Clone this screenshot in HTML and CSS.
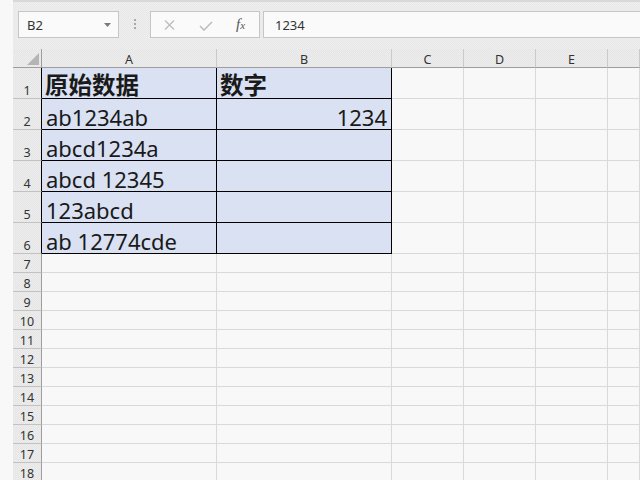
FILE: index.html
```html
<!DOCTYPE html>
<html lang="zh">
<head>
<meta charset="utf-8">
<link rel="stylesheet" href="styles.css">
</head>
<body>
<div class="app">
  <div class="strip"></div>
  <div class="main">
    <div class="toolbar">
      <div class="namebox"><span class="nb-text">B2</span>
        <svg class="arrow" width="7" height="4" viewBox="0 0 7 4"><polygon points="0,0 7,0 3.5,4" fill="#7a7a7a"/></svg>
      </div>
      <div class="dots"><span></span><span></span><span></span></div>
      <div class="fbtns">
        <svg class="ic-x" width="11" height="10" viewBox="0 0 11 10"><path d="M1 0.5 L10 9.5 M10 0.5 L1 9.5" stroke="#bdbdbd" stroke-width="1.3" fill="none"/></svg>
        <svg class="ic-ok" width="14" height="10" viewBox="0 0 14 10"><path d="M1 5 L5 9 L13 1" stroke="#bdbdbd" stroke-width="1.6" fill="none"/></svg>
        <span class="fx"><i>f</i><i class="x">x</i></span>
      </div>
      <div class="formula">1234</div>
    </div>
    <div class="sheet">
      <div class="c ch corner"><svg width="12" height="12" viewBox="0 0 12 12"><polygon points="12,0 12,12 0,12" fill="#b5b5b5"/></svg></div>
      <div class="c ch">A</div><div class="c ch">B</div><div class="c ch">C</div><div class="c ch">D</div><div class="c ch">E</div><div class="c ch"></div>

      <div class="c rh k">1</div><div class="c d t zh">原始数据</div><div class="c d t zh">数字</div><div class="c"></div><div class="c"></div><div class="c"></div><div class="c"></div>
      <div class="c rh k">2</div><div class="c d t">ab1234ab</div><div class="c d t r">1234</div><div class="c"></div><div class="c"></div><div class="c"></div><div class="c"></div>
      <div class="c rh k">3</div><div class="c d t">abcd1234a</div><div class="c d t"></div><div class="c"></div><div class="c"></div><div class="c"></div><div class="c"></div>
      <div class="c rh k">4</div><div class="c d t">abcd 12345</div><div class="c d t"></div><div class="c"></div><div class="c"></div><div class="c"></div><div class="c"></div>
      <div class="c rh k">5</div><div class="c d t">123abcd</div><div class="c d t"></div><div class="c"></div><div class="c"></div><div class="c"></div><div class="c"></div>
      <div class="c rh k">6</div><div class="c d t">ab 12774cde</div><div class="c d t"></div><div class="c"></div><div class="c"></div><div class="c"></div><div class="c"></div>

      <div class="c rh">7</div><div class="c"></div><div class="c"></div><div class="c"></div><div class="c"></div><div class="c"></div><div class="c"></div>
      <div class="c rh">8</div><div class="c"></div><div class="c"></div><div class="c"></div><div class="c"></div><div class="c"></div><div class="c"></div>
      <div class="c rh">9</div><div class="c"></div><div class="c"></div><div class="c"></div><div class="c"></div><div class="c"></div><div class="c"></div>
      <div class="c rh">10</div><div class="c"></div><div class="c"></div><div class="c"></div><div class="c"></div><div class="c"></div><div class="c"></div>
      <div class="c rh">11</div><div class="c"></div><div class="c"></div><div class="c"></div><div class="c"></div><div class="c"></div><div class="c"></div>
      <div class="c rh">12</div><div class="c"></div><div class="c"></div><div class="c"></div><div class="c"></div><div class="c"></div><div class="c"></div>
      <div class="c rh">13</div><div class="c"></div><div class="c"></div><div class="c"></div><div class="c"></div><div class="c"></div><div class="c"></div>
      <div class="c rh">14</div><div class="c"></div><div class="c"></div><div class="c"></div><div class="c"></div><div class="c"></div><div class="c"></div>
      <div class="c rh">15</div><div class="c"></div><div class="c"></div><div class="c"></div><div class="c"></div><div class="c"></div><div class="c"></div>
      <div class="c rh">16</div><div class="c"></div><div class="c"></div><div class="c"></div><div class="c"></div><div class="c"></div><div class="c"></div>
      <div class="c rh">17</div><div class="c"></div><div class="c"></div><div class="c"></div><div class="c"></div><div class="c"></div><div class="c"></div>
      <div class="c rh">18</div><div class="c"></div><div class="c"></div><div class="c"></div><div class="c"></div><div class="c"></div><div class="c"></div>
    </div>
  </div>
</div>
</body>
</html>
```
FILE: styles.css
```css
html, body {
  margin: 0;
  padding: 0;
  width: 640px;
  height: 480px;
  overflow: hidden;
  background: #f8f8f8;
  font-family: "Noto Sans", "Noto Sans CJK SC", sans-serif;
}
.app {
  display: flex;
  height: 480px;
}
.strip {
  width: 13px;
  flex: none;
  background: #f8f8f8;
}
.main {
  flex: 1;
  display: flex;
  flex-direction: column;
  min-width: 0;
  overflow: hidden;
}
.toolbar {
  flex: none;
  height: 49px;
  box-sizing: border-box;
  border-top: 2px solid #d8d8d8;
  padding: 9px 0 0 5px;
  display: flex;
  align-items: flex-start;
  background: #ebebeb;
  background-image: repeating-conic-gradient(#e7e7e7 0 25%, #efefef 0 50%);
  background-size: 2px 2px;
}
.namebox {
  width: 101px;
  height: 27px;
  box-sizing: border-box;
  border: 1px solid #c6c6c6;
  background: #fafafa;
  display: flex;
  align-items: center;
  justify-content: space-between;
  padding: 0 7px 0 7px;
  font-size: 13px;
  color: #333;
}
.nb-text { padding-left: 1px; }
.dots {
  width: 2px;
  margin: 8px 14px 0 15px;
  display: flex;
  flex-direction: column;
  gap: 2px;
}
.dots span {
  width: 2px;
  height: 2px;
  background: #a8a8a8;
}
.fbtns {
  width: 110px;
  height: 27px;
  box-sizing: border-box;
  border: 1px solid #c6c6c6;
  background: #fafafa;
  display: flex;
  align-items: center;
  padding-left: 13px;
}
.ic-x { margin-top: 1px; }
.ic-ok { margin-left: 24px; margin-top: 2px; }
.fx {
  margin-left: 23px;
  font-family: "Liberation Serif", serif;
  font-size: 15px;
  color: #555;
  line-height: 1;
}
.fx .x { font-size: 11px; }
.formula {
  flex: 1;
  height: 27px;
  box-sizing: border-box;
  margin-left: 3px;
  margin-right: -2px;
  border: 1px solid #c6c6c6;
  background: #fafafa;
  font-size: 13px;
  color: #333;
  display: flex;
  align-items: center;
  padding-left: 11px;
}
.sheet {
  flex: none;
  display: grid;
  grid-template-columns: 29px 175px 175px 72px 72px 72px 1fr;
  grid-template-rows: 19px repeat(6, 31px) repeat(12, 19px);
  background: #f8f8f8;
}
.c {
  box-sizing: border-box;
  border-right: 1px solid #d9d9d9;
  border-bottom: 1px solid #d9d9d9;
  min-width: 0;
}
.ch {
  background: #e9e9e9;
  background-image: repeating-conic-gradient(#e5e5e5 0 25%, #ededed 0 50%);
  background-size: 2px 2px;
  border-right-color: #cacaca;
  border-bottom-color: #9e9e9e;
  display: flex;
  align-items: flex-end;
  justify-content: center;
  font-size: 12.5px;
  line-height: 14px;
  color: #333;
  padding-bottom: 0;
}
.corner {
  justify-content: flex-end;
  align-items: flex-end;
  padding: 0 2px 2px 0;
  border-right-color: #9e9e9e;
}
.corner svg { display: block; }
.rh {
  background: #e9e9e9;
  background-image: repeating-conic-gradient(#e5e5e5 0 25%, #ededed 0 50%);
  background-size: 2px 2px;
  border-right-color: #9e9e9e;
  border-bottom-color: #c2c2c2;
  display: flex;
  align-items: flex-end;
  justify-content: center;
  font-size: 12.5px;
  line-height: 14px;
  color: #333;
  padding-bottom: 0;
}
.rh.k { border-right-color: #000; }
.d {
  background: #d9e1f2;
  border-right-color: #000;
  border-bottom-color: #000;
}
.t {
  display: flex;
  align-items: flex-end;
  font-size: 22px;
  line-height: 24px;
  padding: 0 4px 0.5px 4px;
  color: #1a1a1a;
  white-space: nowrap;
}
.r { justify-content: flex-end; }
.zh {
  font-family: "Noto Sans CJK SC", sans-serif;
  font-weight: bold;
  font-size: 23.5px;
  line-height: 28px;
  padding-bottom: 0;
  padding-left: 3px;
}
```
